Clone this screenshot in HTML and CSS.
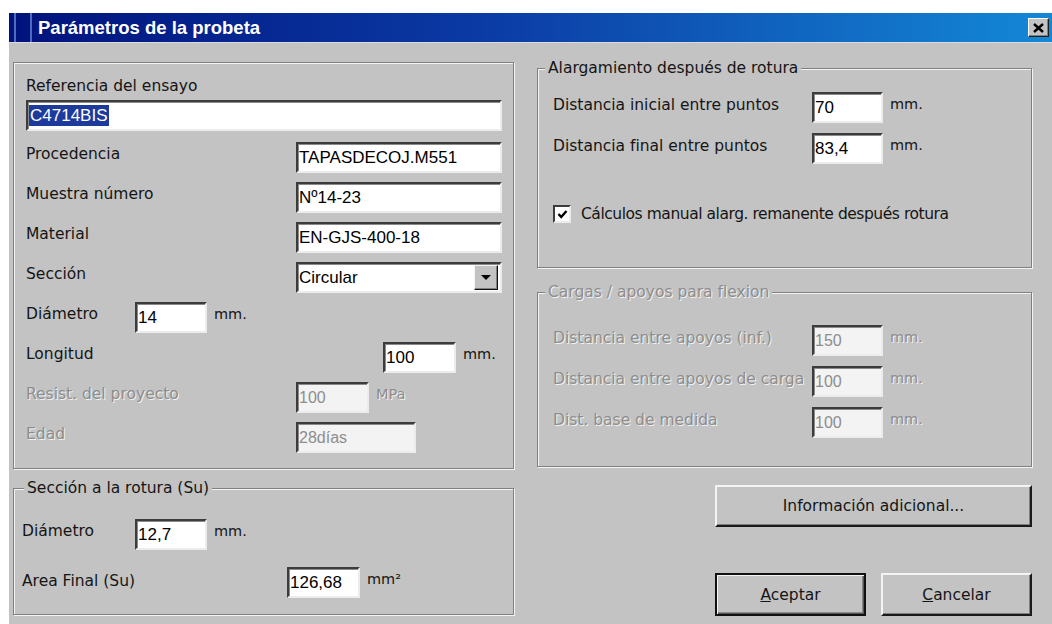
FILE: index.html
```html
<!DOCTYPE html>
<html lang="es">
<head>
<meta charset="utf-8">
<title>Parámetros de la probeta</title>
<link rel="stylesheet" href="styles.css">
</head>
<body>
<div class="window">
  <div class="titlebar">
    <span class="grip"></span>
    <span class="title">Parámetros de la probeta</span>
    <button class="close" type="button" aria-label="Cerrar">
      <svg width="11" height="10" viewBox="0 0 11 10"><path d="M1 1 L10 9 M10 1 L1 9" stroke="#000" stroke-width="2.4" fill="none"/></svg>
    </button>
  </div>

  <div class="client">
    <div class="col">
      <fieldset class="group group-specimen">
        <div class="group-body body-specimen">
          <div class="stack">
            <span class="lbl">Referencia del ensayo</span>
            <div class="edit edit-full"><span class="selection">C4714BIS</span></div>
          </div>
          <div class="row row-first"><span class="lbl lbl-std">Procedencia</span><div class="edit edit-std">TAPASDECOJ.M551</div></div>
          <div class="row"><span class="lbl lbl-std">Muestra número</span><div class="edit edit-std">Nº14-23</div></div>
          <div class="row"><span class="lbl lbl-std">Material</span><div class="edit edit-std">EN-GJS-400-18</div></div>
          <div class="row"><span class="lbl lbl-std">Sección</span>
            <div class="edit edit-std combo"><span class="combo-text">Circular</span><span class="drop"><span class="arrow"></span></span></div>
          </div>
          <div class="row"><span class="lbl lbl-diam">Diámetro</span><div class="edit edit-xs">14</div><span class="unit">mm.</span></div>
          <div class="row"><span class="lbl lbl-long">Longitud</span><div class="edit edit-sm">100</div><span class="unit">mm.</span></div>
          <div class="row is-disabled"><span class="lbl lbl-std">Resist. del proyecto</span><div class="edit edit-sm">100</div><span class="unit">MPa</span></div>
          <div class="row is-disabled"><span class="lbl lbl-std">Edad</span><div class="edit edit-md">28días</div></div>
        </div>
      </fieldset>

      <fieldset class="group group-rupture">
        <legend>Sección a la rotura (Su)</legend>
        <div class="group-body body-rupture">
          <div class="row"><span class="lbl lbl-rdiam">Diámetro</span><div class="edit edit-xs">12,7</div><span class="unit">mm.</span></div>
          <div class="row row-area"><span class="lbl lbl-area">Area Final (Su)</span><div class="edit edit-sm">126,68</div><span class="unit">mm²</span></div>
        </div>
      </fieldset>
    </div>

    <div class="col">
      <fieldset class="group group-elong">
        <legend>Alargamiento después de rotura</legend>
        <div class="group-body body-right body-elong">
          <div class="row"><span class="lbl lbl-right">Distancia inicial entre puntos</span><div class="edit edit-r">70</div><span class="unit">mm.</span></div>
          <div class="row"><span class="lbl lbl-right">Distancia final entre puntos</span><div class="edit edit-r">83,4</div><span class="unit">mm.</span></div>
          <label class="check-row">
            <span class="checkbox"><svg width="11" height="11" viewBox="0 0 11 11"><path d="M1.5 5 L4.2 8 L9.5 2" stroke="#000" stroke-width="2.4" fill="none"/></svg></span>
            <span class="check-text">Cálculos manual alarg. remanente después rotura</span>
          </label>
        </div>
      </fieldset>

      <fieldset class="group group-flex is-disabled">
        <legend>Cargas / apoyos para flexion</legend>
        <div class="group-body body-right body-flex">
          <div class="row"><span class="lbl lbl-right">Distancia entre apoyos (inf.)</span><div class="edit edit-r">150</div><span class="unit">mm.</span></div>
          <div class="row"><span class="lbl lbl-right">Distancia entre apoyos de carga</span><div class="edit edit-r">100</div><span class="unit">mm.</span></div>
          <div class="row"><span class="lbl lbl-right">Dist. base de medida</span><div class="edit edit-r">100</div><span class="unit">mm.</span></div>
        </div>
      </fieldset>

      <button class="btn btn-info" type="button">Información adicional...</button>

      <div class="actions">
        <button class="btn btn-default" type="button"><u>A</u>ceptar</button>
        <button class="btn" type="button"><u>C</u>ancelar</button>
      </div>
    </div>
  </div>
</div>
</body>
</html>
```

FILE: styles.css
```css
* { box-sizing: border-box; }

html, body { margin: 0; }

body {
  background: #fff;
  overflow: hidden;
  font-family: "DejaVu Sans", "Liberation Sans", sans-serif;
  font-size: 15.5px;
  color: #151515;
}

/* dialog window */
.window {
  width: 1043px;
  height: 611px;
  margin: 13px 0 0 9px;
  background: #c3c3c3;
}

.titlebar {
  height: 29px;
  display: flex;
  align-items: center;
  background: linear-gradient(90deg, #00127c 0%, #0b3aa4 45%, #1488d6 100%);
  color: #fff;
}

.grip {
  align-self: stretch;
  width: 18px;
  margin-left: 5px;
  border-left: 2px solid #4d6cbf;
  border-right: 2px solid #4d6cbf;
}

.title {
  margin-left: 6px;
  font-family: "Liberation Sans", Arial, sans-serif;
  font-weight: bold;
  font-size: 18.5px;
}

.close {
  margin-left: auto;
  margin-right: 3px;
  width: 21px;
  height: 19px;
  padding: 0;
  display: flex;
  align-items: center;
  justify-content: center;
  background: #c3c3c3;
  border: 1px solid;
  border-color: #fff #202020 #202020 #fff;
  box-shadow: inset -1px -1px 0 #808080;
}

.client {
  display: grid;
  grid-template-columns: 501px 495px;
  column-gap: 23px;
  padding-left: 4px;
  border-top: 1px solid #dcdcdc;
}

.col {
  display: flex;
  flex-direction: column;
}

/* etched group boxes */
.group {
  margin: 0;
  padding: 0;
  min-width: 0;
  border: 1px solid #808080;
  box-shadow: inset 1px 1px 0 #f4f4f4, 1px 1px 0 #f4f4f4;
}

.group legend {
  margin-left: 7px;
  padding: 0 3px;
  line-height: 20px;
  background: #c3c3c3;
  white-space: nowrap;
}

.group-body {
  display: flex;
  flex-direction: column;
}

.group-specimen { margin-top: 19px; }

.body-specimen {
  padding: 13px 12px 15px 12px;
  gap: 9px;
}

.group-rupture { margin-top: 9px; }
.group-rupture legend { margin-left: 10px; }
.body-rupture { padding: 21px 8px 16px 8px; }
.row-area { margin-top: 17px; }

.group-elong { margin-top: 15px; }
.group-flex { margin-top: 14px; }

.body-right { padding-left: 15px; }
.body-elong { padding-top: 14px; padding-bottom: 43px; gap: 10px; }
.body-flex { padding-top: 23px; padding-bottom: 28px; gap: 10px; }

/* rows */
.stack {
  display: flex;
  flex-direction: column;
  gap: 4px;
}

.row {
  display: flex;
  align-items: flex-start;
  height: 31px;
}

.row-first { margin-top: 2px; }

.lbl {
  flex: none;
  line-height: 20px;
  margin-top: 2px;
  white-space: nowrap;
}

.stack .lbl { margin-top: 0; }

.lbl-std { width: 270px; }
.lbl-diam { width: 109px; }
.lbl-long { width: 357px; }
.lbl-rdiam { width: 113px; }
.lbl-area { width: 265px; margin-top: 4px; }
.lbl-right { width: 259px; margin-top: 3px; }

.unit {
  margin-left: 7px;
  margin-top: 2px;
  line-height: 20px;
  font-size: 14.5px;
}

/* sunken edit fields */
.edit {
  flex: none;
  height: 31px;
  display: flex;
  align-items: center;
  padding-left: 1px;
  background: #fff;
  border: 2px solid;
  border-color: #3c3c3c #ececec #ececec #3c3c3c;
  box-shadow: inset 1px 1px 0 #8a8a8a;
  font-family: "Liberation Sans", Arial, sans-serif;
  font-size: 17px;
  color: #000;
  white-space: nowrap;
}

.edit-full { width: 476px; }
.edit-std { width: 206px; }
.edit-xs { width: 72px; }
.edit-sm { width: 73px; }
.edit-md { width: 120px; }
.edit-r { width: 71px; }

.selection {
  background: #1b3a9c;
  color: #fff;
  line-height: 21px;
  padding: 0 1px;
}

.combo { padding-right: 2px; }
.combo-text { flex: 1; }

.drop {
  width: 24px;
  height: 25px;
  display: flex;
  align-items: center;
  justify-content: center;
  background: #c3c3c3;
  border: 1px solid;
  border-color: #f4f4f4 #111 #111 #f4f4f4;
  box-shadow: inset -1px -1px 0 #808080;
}

.arrow {
  width: 0;
  height: 0;
  border-left: 5px solid transparent;
  border-right: 5px solid transparent;
  border-top: 5px solid #000;
}

/* checkbox */
.check-row {
  display: flex;
  align-items: center;
  height: 20px;
  margin-top: 30px;
}

.checkbox {
  width: 18px;
  height: 18px;
  display: flex;
  align-items: center;
  justify-content: center;
  background: #fff;
  border: 2px solid;
  border-color: #3c3c3c #ececec #ececec #3c3c3c;
}

.check-text {
  margin-left: 10px;
  white-space: nowrap;
  letter-spacing: -0.45px;
}

/* disabled controls */
.is-disabled .lbl,
.is-disabled .unit,
.is-disabled legend {
  color: #8d8d8d;
  text-shadow: 1px 1px 0 #f2f2f2;
}

.is-disabled .edit {
  background: #f3f3f3;
  color: #8d8d8d;
  font-size: 16px;
}

/* push buttons */
.btn {
  font-family: "DejaVu Sans", "Liberation Sans", sans-serif;
  font-size: 15.5px;
  color: #151515;
  background: #c3c3c3;
  border: 2px solid;
  border-color: #f4f4f4 #1a1a1a #1a1a1a #f4f4f4;
  box-shadow: inset -1px -1px 0 #808080;
  padding: 0;
}

.btn-info {
  align-self: flex-end;
  width: 317px;
  height: 42px;
  margin-top: 18px;
}

.actions {
  display: flex;
  justify-content: flex-end;
  gap: 15px;
  margin-top: 46px;
}

.actions .btn {
  width: 151px;
  height: 43px;
}

.btn-default {
  border: 2px solid #111;
  box-shadow: inset 1px 1px 0 #f4f4f4, inset -1px -1px 0 #555, inset -2px -2px 0 #8a8a8a;
}
```
